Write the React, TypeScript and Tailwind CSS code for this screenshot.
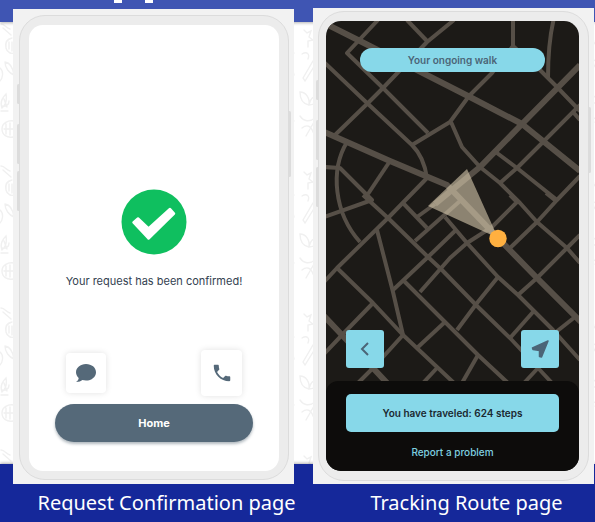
import type { ReactNode } from "react";

const FONT = "font-['Inter','Liberation_Sans',sans-serif]";

function Doodles() {
  return (
    <svg className="absolute inset-0 -z-20 h-full w-full" aria-hidden="true">
      <defs>
        <pattern id="doodles" width="40" height="142" patternUnits="userSpaceOnUse">
          <g fill="none" stroke="#f0f0f0" strokeWidth="1.4" strokeLinecap="round">
            <path d="M1 24c4 0 5 4 9 5M3 28l8 7M12 38c-5 1-7 5-6 10s6 6 8 5M9 42v7M12 42v9" />
            <path d="M5 62c0 6 4 11 9 13M5 62c6 1 8 6 9 13M0 68c4 3 3 11-1 14" />
            <path d="M2 108c4-3 5-8 4-14-4 4-6 9-4 14zM2 106c5 1 7-2 7-5M4 99l3 8M1 111h7" />
            <path d="M14 121c-6-1-12 2-12 8s5 9 11 8M4 129h9M6 124v10M10 123v12" />
            <path d="M24 30l3 3 4-2-2 6 4 3-5 1v6M34 44l4-7M22 54c5-3 8 0 6 5M23 78l10-17c3-2 4 0 2 4L25 81z" />
            <path d="M20 92c6 0 10 6 9 13-6-1-9-6-9-13zM29 105c1-6 4-9 9-9-1 6-4 9-9 9zM20 116c4 6 10 6 15 2M22 128c5-4 9-2 11 4M26 136l8-14" />
          </g>
        </pattern>
      </defs>
      <rect width="100%" height="100%" fill="url(#doodles)" />
    </svg>
  );
}

function SideKey({ place }: { place: string }) {
  return <span className={`absolute w-[3px] rounded-sm bg-[#dcdcdc] ${place}`} />;
}

function Phone({ caption, className, shell, screen, children }: {
  caption: string;
  className: string;
  shell: string;
  screen: string;
  children: ReactNode;
}) {
  return (
    <figure className={`flex min-w-0 flex-1 flex-col ${className}`}>
      <div className={`flex flex-1 flex-col bg-[#f2f2f2] ${shell}`}>
        <div className={`relative flex flex-1 flex-col rounded-[26px] border border-[#dcdcdc] bg-[#ececec] ${screen}`}>
          <SideKey place="-left-[3px] top-[68px] h-5" />
          <SideKey place="-left-[3px] top-[108px] h-10" />
          <SideKey place="-left-[3px] top-[155px] h-10" />
          <SideKey place="-right-[3px] top-[95px] h-[66px]" />
          {children}
        </div>
      </div>
      <figcaption className="flex h-[38px] items-center justify-center whitespace-nowrap pl-[26px] font-['Noto_Sans','Liberation_Sans',sans-serif] text-[20px] leading-6 text-white">
        {caption}
      </figcaption>
    </figure>
  );
}

function ConfirmationScreen() {
  return (
    <div className="flex flex-1 flex-col items-center rounded-[14px] bg-white px-[26px] pb-[29px] text-[#334150]">
      <svg className="mt-[164px] h-[66px] w-[66px] shrink-0" viewBox="0 0 66 66" role="img" aria-label="Confirmed">
        <circle cx="33" cy="33" r="32.5" fill="#0fbf5f" />
        <path d="M12.500 33.500L17 29.500L27.500 39.500L49 20L53 24.500L27.500 49.500Z" fill="white" stroke="white" strokeWidth="2.500" strokeLinejoin="round" />
      </svg>
      <p className="mt-[18px] whitespace-nowrap text-[11px] leading-4">Your request has been confirmed!</p>
      <div className="mt-auto flex w-full items-center justify-between px-[11px]">
        <button type="button" aria-label="Message" className="flex h-10 w-10 items-center justify-center rounded-[4px] bg-white shadow-[0_0_6px_rgba(0,0,0,0.12)]">
          <svg className="h-5 w-[22px]" viewBox="0 0 22 20" fill="#556979">
            <path d="M11 1C5.300 1 1 4.700 1 9.200c0 2.200 1 4.200 2.700 5.700C3.500 16.500 2.600 17.700 1 19c2.700.1 4.800-.7 6.400-2 1.100.3 2.300.5 3.600.5 5.700 0 10-3.700 10-8.300S16.700 1 11 1z" />
          </svg>
        </button>
        <button type="button" aria-label="Call" className="flex h-[46px] w-[41px] items-center justify-center rounded-[4px] bg-white shadow-[0_0_6px_rgba(0,0,0,0.12)]">
          <svg className="h-[22px] w-[22px]" viewBox="0 0 24 24" fill="#556979">
            <path d="M6.620 10.790c1.440 2.830 3.760 5.140 6.590 6.590l2.200-2.200c.27-.27.67-.36 1.020-.24 1.120.37 2.330.57 3.570.57.550 0 1 .45 1 1V20c0 .55-.45 1-1 1-9.390 0-17-7.610-17-17 0-.55.45-1 1-1h3.500c.55 0 1 .45 1 1 0 1.250.2 2.450.57 3.570.11.35.03.74-.25 1.020l-2.200 2.200z" />
          </svg>
        </button>
      </div>
      <button type="button" className="mt-2 h-[38px] w-full shrink-0 rounded-full bg-[#556979] text-[11px] font-bold text-white shadow-[0_2px_3px_rgba(60,80,95,0.4)]">
        Home
      </button>
    </div>
  );
}

const WIDE_ROADS = [
  "M322 22L360 41L468 96L522 124L580 171",
  "M580 65L522 124L480 167L435 204",
  "M322 131L347 142L390 161L447 185L498 238L537 278L582 323",
];

const ROADS = [
  "M378 20L347 53L382 87L428 133",
  "M407 20L427 41",
  "M454 20L427 42L383 88L367 104L335 135",
  "M324 62L367 103L412 145Q424 157 427 178",
  "M412 145L450 122L469 96L492 73L513 46V18",
  "M513 46L540 70L557 87L580 111",
  "M451 122L462 147L480 167L500 183L520 203L537 222L567 248L580 263",
  "M554 18Q548 42 548 78",
  "M580 105L545 140L517 168L500 183",
  "M573 112L580 120",
  "M497 153L517 168L557 200",
  "M580 176L557 200L537 222L510 248",
  "M546 193L556 201",
  "M510 195L517 202L492 227L467 243L450 258L420 292",
  "M580 235L567 248L537 278L518 295",
  "M445 217L467 243L498 277L518 295L553 330L580 360",
  "M498 277L477 303L457 330",
  "M445 322L418 347",
  "M363 195L388 218L428 257L442 270L477 306L510 338L538 368L552 383",
  "M538 368L524 383",
  "M510 338L533 312",
  "M403 280L445 322L478 355L508 383",
  "M478 355L462 383",
  "M427 178L388 218L337 268L324 282",
  "M337 268L373 303L403 335L454 383",
  "M437 368L423 383",
  "M377 230L393 292L403 335",
  "M373 303L342 335L324 354",
  "M403 335L373 368L358 383",
  "M393 290L428 257L457 229",
  "M403 203L427 228",
  "M415 241L460 201",
  "M417 217L435 204",
  "M347 142C330 170 334 213 360 242",
  "M324 167L340 168L372 200L324 217",
  "M390 161L368 194",
  "M575 317L556 332",
];

function WalkMap() {
  return (
    <svg className="absolute inset-0 h-full w-full" viewBox="326 21 253 450" preserveAspectRatio="xMidYMin slice" aria-hidden="true">
      <g fill="none" stroke="#564f47" strokeLinejoin="round">
        <g strokeWidth="4">{ROADS.map((d) => <path key={d} d={d} />)}</g>
        <g strokeWidth="6">{WIDE_ROADS.map((d) => <path key={d} d={d} />)}</g>
        <path strokeWidth="6" d="M322 314L342 335L373 368L388 384" />
      </g>
      <path d="M498 238L428 206Q450 185 467 169Z" fill="#ded0b3" fillOpacity="0.58" />
      <circle cx="498" cy="238.500" r="8.700" fill="#ffb040" />
    </svg>
  );
}

function RouteScreen() {
  const tile = "flex h-[38px] w-[38px] items-center justify-center rounded-[3px] bg-[#87d8e9]";
  return (
    <div className="relative isolate flex flex-1 flex-col overflow-hidden rounded-[15px] bg-[#1c1a17]">
      <WalkMap />
      <h2 className="relative mx-[34px] mt-[27px] h-6 rounded-full bg-[#87d8e9] text-center text-[10px] font-semibold leading-6 text-[#4b6577]">
        Your ongoing walk
      </h2>
      <div className="relative mt-auto flex justify-between px-5 pb-[13px]">
        <button type="button" aria-label="Back" className={tile}>
          <svg className="h-4 w-4" viewBox="0 0 16 16" fill="none" stroke="#4b6577" strokeWidth="2">
            <path d="M11 2L5 8L11 14" />
          </svg>
        </button>
        <button type="button" aria-label="Navigate" className={tile}>
          <svg className="h-5 w-5" viewBox="0 0 20 20" fill="#4b6577" stroke="#4b6577" strokeWidth="1.500" strokeLinejoin="round">
            <path d="M18 2L2.500 9L3 10.500L9.500 11.500L9.500 17.500L11.500 18Z" />
          </svg>
        </button>
      </div>
      <div className="relative flex flex-col items-center rounded-t-[12px] bg-[#0d0c0b] px-5 pb-[11px] pt-[13px]">
        <p className="h-[38px] w-full rounded-[5px] bg-[#87d8e9] text-center text-[10px] font-semibold leading-[38px] text-[#1b2830]">
          You have traveled: 624 steps
        </p>
        <a href="#report" className="mt-3 text-[10px] font-medium leading-4 text-[#7fd0e0]">Report a problem</a>
      </div>
    </div>
  );
}

export default function App() {
  return (
    <main className={`relative isolate flex min-h-screen gap-[19px] overflow-hidden bg-white pl-[13px] pr-px ${FONT}`}>
      <Doodles />
      <div className="absolute inset-x-0 top-0 -z-10 flex h-[22px] gap-[23px] bg-[#3f55b3] pl-[114px] shadow-[0_1px_3px_rgba(0,0,0,0.3)]">
        <span className="h-[3px] w-2 bg-white" />
        <span className="h-[3px] w-2 bg-white" />
      </div>
      <div className="absolute inset-x-0 bottom-0 -z-10 h-[58px] bg-[#15289a] shadow-[0_-1px_3px_rgba(0,0,0,0.3)]" />
      <Phone caption="Request Confirmation page" className="pt-[9px]" shell="pb-1 pl-[6px] pr-[5px] pt-[6px]" screen="pl-[9px] pr-[9px] pb-2 pt-[9px]">
        <ConfirmationScreen />
      </Phone>
      <Phone caption="Tracking Route page" className="pt-2" shell="pb-[3px] px-[5px] pt-[3px]" screen="pl-[7px] pr-[9px] pb-[9px] pt-[9px]">
        <RouteScreen />
      </Phone>
    </main>
  );
}
